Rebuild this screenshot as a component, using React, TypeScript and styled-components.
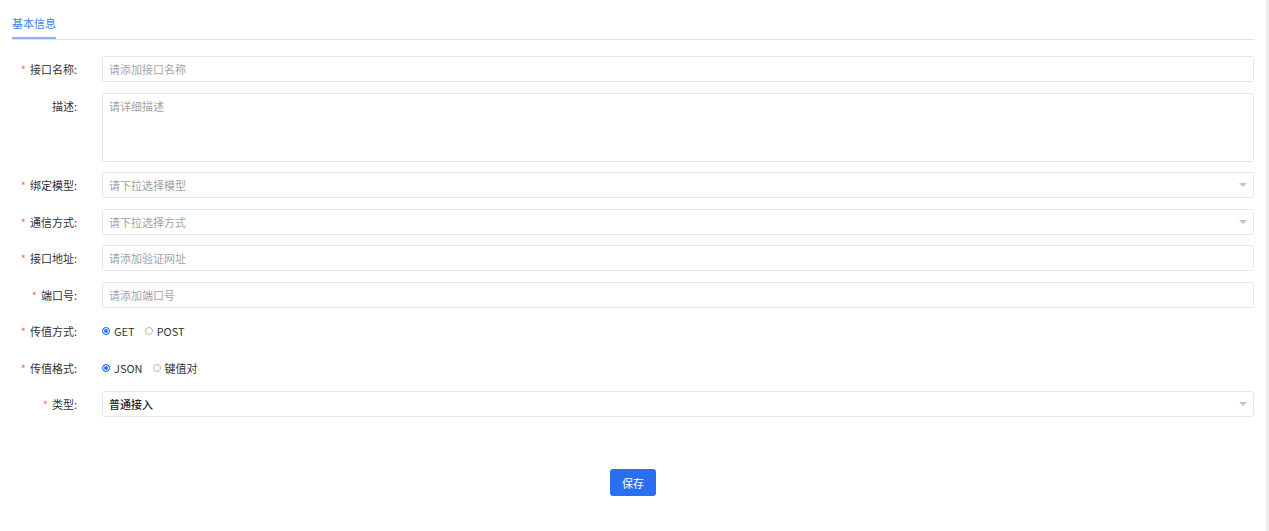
import React from "react";
import styled, { createGlobalStyle } from "styled-components";

const Global = createGlobalStyle`
  html, body { margin: 0; padding: 0; background: #fff; }
  body { font-family: "Noto Sans CJK SC", "Noto Sans", sans-serif; font-size: 11px; color: #333; }
`;

const Page = styled.div`
  display: flex;
  width: 1269px;
  height: 531px;
  overflow: hidden;
`;

const Main = styled.div`
  flex: 1;
  padding: 0 12px 0 12px;
`;

const Rail = styled.div`
  width: 3px;
  background: #ececec;
`;

const TabBar = styled.div`
  display: flex;
  height: 39px;
  border-bottom: 1px solid #e0e0e0;
`;

const Tab = styled.div`
  display: flex;
  align-items: center;
  height: 39px;
  box-sizing: border-box;
  padding-top: 9px;
  color: #3d7ff0;
  font-size: 11px;
  border-bottom: 2px solid #8db2f3;
`;

const Form = styled.div`
  display: flex;
  flex-direction: column;
  gap: 10.5px;
  padding-top: 16px;
`;

const Row = styled.div`
  display: grid;
  grid-template-columns: 90px 1fr;
  align-items: start;
`;

const Label = styled.div<{ $req?: boolean }>`
  height: 26px;
  line-height: 26px;
  text-align: right;
  padding-right: 25px;
  color: #333;
  white-space: nowrap;
  &::before {
    content: ${(p) => (p.$req ? '"*"' : '""')};
    color: #f56c6c;
    margin-right: 4px;
  }
`;

const Input = styled.div<{ $h?: number; $value?: boolean }>`
  position: relative;
  height: ${(p) => p.$h ?? 26}px;
  box-sizing: border-box;
  border: 1px solid #e6e6e6;
  border-radius: 3px;
  padding: 0 6px;
  line-height: 24px;
  color: ${(p) => (p.$value ? "#222" : "#a3a3a3")};
  font-weight: ${(p) => (p.$value ? 500 : 400)};
  background: #fff;
`;

const Arrow = styled.span`
  position: absolute;
  right: 6px;
  top: 10px;
  width: 0;
  height: 0;
  border-left: 4px solid transparent;
  border-right: 4px solid transparent;
  border-top: 4px solid #c4c4c4;
`;

const RadioGroup = styled.div`
  display: flex;
  align-items: center;
  height: 26px;
  gap: 10px;
`;

const RadioItem = styled.label`
  display: flex;
  align-items: center;
  gap: 4px;
  color: #333;
  font-size: 11px;
`;

const Dot = styled.span<{ $on?: boolean }>`
  width: 8px;
  height: 8px;
  box-sizing: border-box;
  border-radius: 50%;
  border: 1px solid ${(p) => (p.$on ? "#2d73f0" : "#b8b8b8")};
  background: ${(p) => (p.$on ? "#2d73f0" : "#fff")};
  box-shadow: ${(p) => (p.$on ? "inset 0 0 0 1px #fff" : "none")};
`;

const Footer = styled.div`
  display: flex;
  justify-content: center;
  padding-top: 52px;
`;

const Button = styled.button`
  width: 46px;
  height: 27px;
  border: none;
  border-radius: 3px;
  background: #2b6ff0;
  color: #fff;
  font-family: inherit;
  font-size: 11px;
  padding: 0;
`;

export default function App() {
  return (
    <Page>
      <Global />
      <Main>
        <TabBar>
          <Tab>基本信息</Tab>
        </TabBar>
        <Form>
          <Row>
            <Label $req>接口名称:</Label>
            <Input>请添加接口名称</Input>
          </Row>
          <Row>
            <Label>描述:</Label>
            <Input $h={69}>请详细描述</Input>
          </Row>
          <Row>
            <Label $req>绑定模型:</Label>
            <Input>
              请下拉选择模型
              <Arrow />
            </Input>
          </Row>
          <Row>
            <Label $req>通信方式:</Label>
            <Input>
              请下拉选择方式
              <Arrow />
            </Input>
          </Row>
          <Row>
            <Label $req>接口地址:</Label>
            <Input>请添加验证网址</Input>
          </Row>
          <Row>
            <Label $req>端口号:</Label>
            <Input>请添加端口号</Input>
          </Row>
          <Row>
            <Label $req>传值方式:</Label>
            <RadioGroup>
              <RadioItem>
                <Dot $on />
                GET
              </RadioItem>
              <RadioItem>
                <Dot />
                POST
              </RadioItem>
            </RadioGroup>
          </Row>
          <Row>
            <Label $req>传值格式:</Label>
            <RadioGroup>
              <RadioItem>
                <Dot $on />
                JSON
              </RadioItem>
              <RadioItem>
                <Dot />
                键值对
              </RadioItem>
            </RadioGroup>
          </Row>
          <Row>
            <Label $req>类型:</Label>
            <Input $value>
              普通接入
              <Arrow />
            </Input>
          </Row>
        </Form>
        <Footer>
          <Button>保存</Button>
        </Footer>
      </Main>
      <Rail />
    </Page>
  );
}
